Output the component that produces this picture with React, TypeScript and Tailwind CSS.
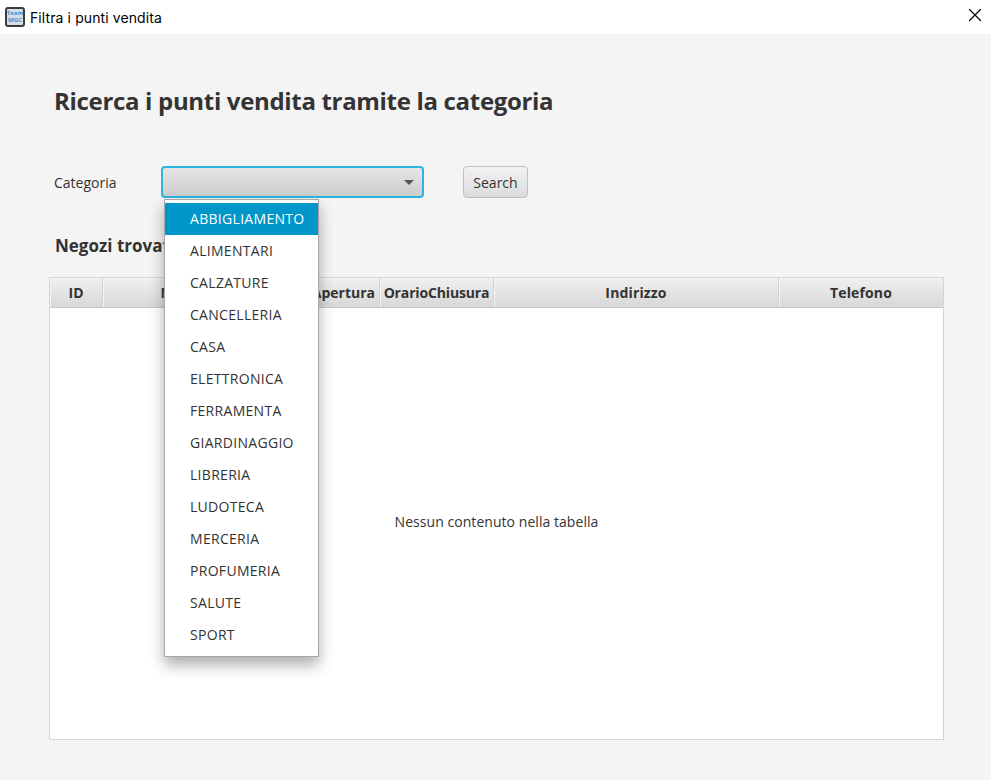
import { X } from "lucide-react";

const CATEGORIE = [
  "ABBIGLIAMENTO",
  "ALIMENTARI",
  "CALZATURE",
  "CANCELLERIA",
  "CASA",
  "ELETTRONICA",
  "FERRAMENTA",
  "GIARDINAGGIO",
  "LIBRERIA",
  "LUDOTECA",
  "MERCERIA",
  "PROFUMERIA",
  "SALUTE",
  "SPORT",
];

function Col({ label, className }: { label: string; className: string }) {
  return (
    <div className={`flex items-center justify-center border-r border-[#d2d2d2] bg-gradient-to-b from-[#f0f0f0] to-[#d8d8d8] shadow-[inset_1px_1px_0_#f4f4f4] whitespace-nowrap overflow-hidden ${className}`}>
      {label}
    </div>
  );
}

function AppIcon() {
  return (
    <div className="w-[20px] h-[20px] rounded-[3px] border-2 border-[#3c3c3c] bg-[#d5dde6] flex flex-col items-center justify-center text-[6px] leading-[7px] font-bold text-[#3f8fd0]">
      <span>Team</span>
      <span>MGC</span>
    </div>
  );
}

export default function App() {
  return (
    <div className="w-[991px] h-[780px] flex flex-col bg-[#f4f4f4] overflow-hidden font-['Open_Sans','Noto_Sans',sans-serif] text-[#333333]">
      <div className="h-[34px] bg-white flex items-center pl-[5px] pr-[5px] shrink-0">
        <AppIcon />
        <span className="ml-[5px] text-[14px] text-black font-['Inter',sans-serif] tracking-[0.1px]">Filtra i punti vendita</span>
        <X size={22} strokeWidth={1.3} className="ml-auto text-black -mt-[4px]" />
      </div>

      <div className="flex-1 flex flex-col relative">
        <h1 className="ml-[54px] mt-[50px] h-[34px] text-[24px] leading-[34px] font-bold tracking-[-0.32px]">
          Ricerca i punti vendita tramite la categoria
        </h1>

        <div className="flex items-center mt-[48px] ml-[54px] h-[32px] text-[14px]">
          <span className="w-[107px]">Categoria</span>
          <div className="w-[263px] h-[32px] rounded-[4px] border-2 border-[#2db4e3] bg-gradient-to-b from-[#e6e6e6] to-[#cccccc] flex items-center justify-end pr-[8px]">
            <div className="w-0 h-0 border-l-[5px] border-r-[5px] border-t-[5px] border-l-transparent border-r-transparent border-t-[#555555]" />
          </div>
          <button className="ml-[39px] w-[65px] h-[32px] rounded-[4px] border border-[#c0c0c0] bg-gradient-to-b from-[#f2f2f2] to-[#dcdcdc] text-[14px] text-[#333333]">
            Search
          </button>
        </div>

        <h2 className="ml-[55px] mt-[34px] h-[28px] text-[17px] leading-[28px] font-bold">Negozi trovati</h2>

        <div className="ml-[49px] mt-[17px] w-[895px] h-[463px] border border-[#d4d4d4] bg-white flex flex-col">
          <div className="h-[30px] flex border-b border-[#c8c8c8] text-[14px] font-bold shrink-0">
            <Col label="ID" className="w-[53px]" />
            <Col label="Nome" className="w-[158px]" />
            <Col label="OrarioApertura" className="w-[119px] justify-end pr-[4px]" />
            <Col label="OrarioChiusura" className="w-[114px] tracking-[-0.15px]" />
            <Col label="Indirizzo" className="w-[285px] tracking-[0.15px]" />
            <Col label="Telefono" className="flex-1 border-r-0 tracking-[0.15px]" />
          </div>
          <div className="flex-1 flex items-center justify-center text-[14px] tracking-[0.05px] pb-[5px]">Nessun contenuto nella tabella</div>
        </div>

        {/* popup del combo, sta sopra alla tabella */}
        <div className="absolute left-[164px] top-[165px] w-[155px] h-[458px] bg-white border border-[#a8a8a8] pt-[3px] shadow-[0_8px_14px_rgba(0,0,0,0.32)] text-[14px] tracking-[0.3px]">
          {CATEGORIE.map((c, i) => (
            <div key={c} className={`h-[32px] flex items-center pl-[25px] pb-[2px] ${i === 0 ? "bg-[#0096c9] text-white" : ""}`}>
              {c}
            </div>
          ))}
        </div>
      </div>
    </div>
  );
}
